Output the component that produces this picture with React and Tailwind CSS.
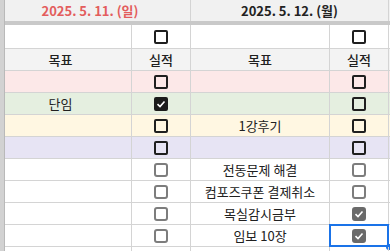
import React from "react";

const FONT = { fontFamily: '"Noto Sans CJK KR", "Noto Sans", sans-serif' };

function Box({ dark, checked }) {
  if (dark) {
    return (
      <div
        className={
          "w-[14px] h-[14px] rounded-[2px] border-2 flex items-center justify-center " +
          (checked ? "bg-[#1b1b1b] border-[#1b1b1b]" : "border-[#1f1f1f]")
        }
      >
        {checked && (
          <svg width="10" height="10" viewBox="0 0 10 10">
            <path d="M1.5 5.2 L4 7.5 L8.5 2.5" fill="none" stroke="#fff" strokeWidth="1.6" />
          </svg>
        )}
      </div>
    );
  }
  return (
    <div
      className={
        "w-[14px] h-[14px] rounded-[3px] border-2 flex items-center justify-center " +
        (checked ? "bg-[#6a6a6a] border-[#6a6a6a]" : "border-[#7d7d7d]")
      }
    >
      {checked && (
        <svg width="10" height="10" viewBox="0 0 10 10">
          <path d="M1.5 5.2 L4 7.5 L8.5 2.5" fill="none" stroke="#fff" strokeWidth="1.6" />
        </svg>
      )}
    </div>
  );
}

const rows = [
  { bg: "bg-[#fce8e8]", a: "", ac: false, b: "", bc: false, dark: true },
  { bg: "bg-[#e5efe0]", a: "단임", ac: true, b: "", bc: false, dark: true },
  { bg: "bg-[#fff7e2]", a: "", ac: false, b: "1강후기", bc: false, dark: true },
  { bg: "bg-[#e7e4f4]", a: "", ac: false, b: "", bc: false, dark: true },
  { bg: "bg-white", a: "", ac: false, b: "전동문제 해결", bc: false, dark: false },
  { bg: "bg-white", a: "", ac: false, b: "컴포즈쿠폰 결제취소", bc: false, dark: false },
  { bg: "bg-white", a: "", ac: false, b: "목실감시금부", bc: true, dark: false },
  { bg: "bg-white", a: "", ac: false, b: "임보 10장", bc: true, dark: false, sel: true },
  { bg: "bg-white", a: "", ac: false, b: "", bc: true, dark: false },
];

const cell = "border-r border-b border-[#d4d4d4] flex items-center justify-center";

export default function App() {
  return (
    <div
      className="w-[390px] h-[251px] overflow-hidden flex bg-white text-[13px] text-[#202020]"
      style={FONT}
    >
      <div className="w-[5px] shrink-0 bg-[#d2d2d2] border-r border-[#b9b9b9]" />
      <div className="flex-1 overflow-hidden">
        <div className="ml-[-15px] w-[560px] flex flex-col">
          {/* date header */}
          <div className="grid grid-cols-[201px_198px_161px] h-[21px] bg-[#f1f1f1]">
            <div className="border-r border-[#d4d4d4] flex items-center justify-center font-bold text-[#e35d5d]">
              2025. 5. 11. (일)
            </div>
            <div className="border-r border-[#d4d4d4] flex items-center justify-center font-bold text-[#222]">
              2025. 5. 12. (월)
            </div>
            <div />
          </div>
          <div className="h-[4px] bg-[#c9c9c9]" />
          {/* checkbox row */}
          <div className="grid grid-cols-[142px_59px_139px_59px_161px] h-[24px] bg-white">
            <div className={cell} />
            <div className={cell}><Box dark /></div>
            <div className={cell} />
            <div className={cell}><Box dark /></div>
            <div className={cell} />
          </div>
          {/* header row */}
          <div className="grid grid-cols-[142px_59px_139px_59px_161px] h-[22px] bg-[#f3f3f3] font-medium">
            <div className={cell}>목표</div>
            <div className={cell}>실적</div>
            <div className={cell}>목표</div>
            <div className={cell}>실적</div>
            <div className={cell} />
          </div>
          {rows.map((r, i) => (
            <div key={i} className={"grid grid-cols-[142px_59px_139px_59px_161px] h-[22px] " + r.bg}>
              <div className={cell}>{r.a}</div>
              <div className={cell}><Box dark={r.dark} checked={r.ac} /></div>
              <div className={cell}>{r.b}</div>
              <div className={cell + " relative"}>
                <Box dark={r.dark} checked={r.bc} />
                {r.sel && (
                  <>
                    <div className="absolute left-[-1px] top-[-1px] right-[-1px] bottom-[-1px] border-2 border-[#1a73e8]" />
                    <div className="absolute right-[-4px] bottom-[-4px] w-[6px] h-[6px] rounded-full bg-[#1a73e8]" />
                  </>
                )}
              </div>
              <div className={cell} />
            </div>
          ))}
        </div>
      </div>
    </div>
  );
}
